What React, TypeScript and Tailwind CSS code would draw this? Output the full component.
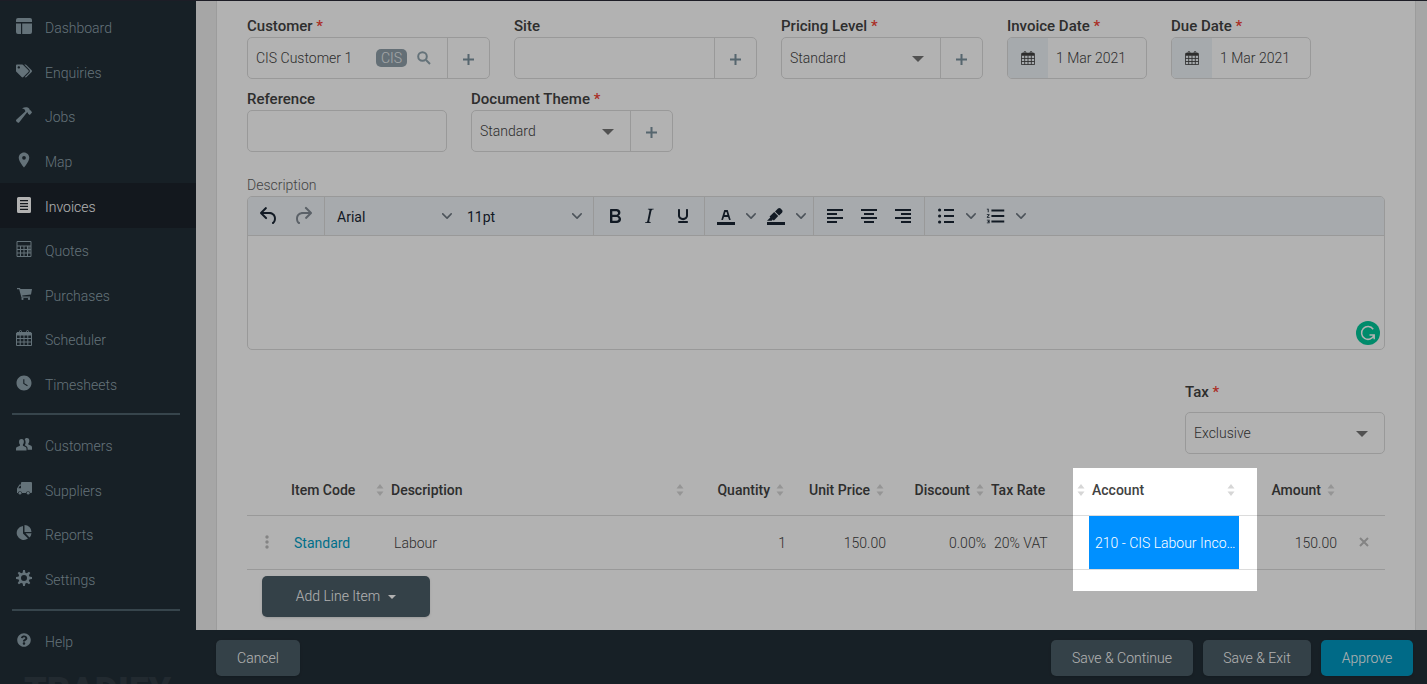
import { useState } from 'react';
import type { ReactNode } from 'react';
import { FaTags, FaQuestionCircle } from 'react-icons/fa';
import { MdFormatListNumbered, MdLocationOn, MdWatchLater } from 'react-icons/md';
import { clsx } from 'clsx';

interface NavItem {
  label: string;
  icon: ReactNode;
  active?: boolean;
}

function DashboardIcon() {
  return (
    <svg viewBox="0 0 16 16" className="h-4 w-4" fill="currentColor" aria-hidden="true">
      <path d="M2 0h12a2 2 0 0 1 2 2v2H0V2a2 2 0 0 1 2-2ZM0 5.500h5V16H2a2 2 0 0 1-2-2ZM6.200 5.500H16V14a2 2 0 0 1-2 2H6.200Z" />
    </svg>
  );
}

function HammerIcon() {
  return (
    <svg viewBox="0 0 16 16" className="h-4 w-4" fill="currentColor" aria-hidden="true">
      <path d="M6 1.600C8.500-.1 11.500-.2 13.300 1.800l.6 1.500 1 .2 1.100 1.900-2.200 2.500-1.700-1.200-.2-1.100-1-.2L3.300 15.300a1.300 1.300 0 0 1-1.900 0l-.9-.8a1.300 1.300 0 0 1 0-1.900L9.300 4.500C9.400 2.900 8 1.700 6 1.600Z" />
    </svg>
  );
}

function InvoiceIcon() {
  return (
    <svg viewBox="0 0 14 16" className="h-4 w-3.5" fill="currentColor" aria-hidden="true">
      <path fillRule="evenodd" d="M1.500 0h11A1.500 1.500 0 0 1 14 1.500v13a1.500 1.500 0 0 1-1.500 1.500h-11A1.500 1.500 0 0 1 0 14.500v-13A1.500 1.500 0 0 1 1.500 0ZM3 3v1.300h8V3Zm0 2.900v1.300h8V5.900Zm0 2.900v1.300h8V8.800Zm0 2.900V13h8v-1.300Z" />
    </svg>
  );
}

function CalculatorIcon() {
  return (
    <svg viewBox="0 0 15 16" className="h-4 w-4" fill="none" stroke="currentColor" aria-hidden="true">
      <path d="M.5.5h14v15H.5ZM.5 5h14M.5 8.500h14M.5 12h14M4 5v10.500M7.500 5v10.500M11 5v10.500" />
      <path d="M11 5h3v7h-3Z" fill="currentColor" stroke="none" opacity="0.5" />
    </svg>
  );
}

function CalendarIcon({ className = 'h-4 w-4' }: { className?: string }) {
  return (
    <svg viewBox="0 0 16 16" className={className} fill="none" stroke="currentColor" aria-hidden="true">
      <path d="M.5 3h15v12.500H.5ZM.5 8.500h15M.5 12h15M4.200 5v10.500M8 5v10.500M11.800 5v10.500" />
      <path d="M1 2h14v3.500H1Z" fill="currentColor" stroke="none" />
      <rect x="3.500" y=".5" width="2" height="3.500" rx="1" />
      <rect x="10.500" y=".5" width="2" height="3.500" rx="1" />
    </svg>
  );
}

function CartIcon() {
  return (
    <svg viewBox="0 0 15 12" className="h-3 w-[15px]" fill="currentColor" aria-hidden="true">
      <path d="M0 0h3l.4 1H15l-1 5.500-8.800 1 .3 1H13v1.200H4.500L2.200 1.200H0Z" />
      <circle cx="5.500" cy="10.900" r="1.100" />
      <circle cx="12" cy="10.900" r="1.100" />
    </svg>
  );
}

function PeopleIcon() {
  return (
    <svg viewBox="0 0 16 13" className="h-[13px] w-4" fill="currentColor" aria-hidden="true">
      <path d="M5.500 1C7.300 1 8 2.300 7.900 4c-.1 1.200-.5 2-1 2.600v1.100l2.600 1.200c.7.400 1 .9 1 1.900v1.700H0v-1.700c0-1 .3-1.500 1-1.900l2.900-1.200V6.600C3.300 6 3 5.200 3 4c0-1.800.7-3 2.500-3Z" />
      <path d="M10.800 0c1.900 0 2.600 1.200 2.500 2.900-.1 1.200-.4 2-1 2.600v1l2.400 1.100c.8.400 1.300.9 1.300 2v2.200h-4.400v-1.200c0-1.300-.6-2.100-1.600-2.600L9.200 7.600c-.4-.2-.5-.5-.2-.9.800-1.200.9-3.700-.2-5.300.3-.8.900-1.400 2-1.400Z" />
    </svg>
  );
}

function TruckIcon() {
  return (
    <svg viewBox="0 0 16 13" className="h-[13px] w-4" fill="currentColor" aria-hidden="true">
      <path fillRule="evenodd" d="M6 0h9a1 1 0 0 1 1 1v9a.9.9 0 0 1-.9.900h-.8a2.200 2.200 0 0 0-4.300 0H6.100a2.200 2.200 0 0 0-4.300 0H1V6.400L3.500 2.500H5V1a1 1 0 0 1 1-1ZM2.300 6.300H5V3.700H4Z" />
      <circle cx="4" cy="11.200" r="1.400" />
      <circle cx="12.200" cy="11.200" r="1.400" />
    </svg>
  );
}

function PieIcon() {
  return (
    <svg viewBox="0 0 16 16" className="h-4 w-4" fill="currentColor" aria-hidden="true">
      <path d="M7 1v7.500l5 5A7 7 0 1 1 7 1Z" />
      <path d="M8.500 0A7 7 0 0 1 15.500 7H8.500Z" />
      <path d="M9.500 8.300h6a7 7 0 0 1-2 4.200Z" />
    </svg>
  );
}

function GearIcon() {
  return (
    <svg viewBox="0 0 16 16" className="h-4 w-4" fill="currentColor" aria-hidden="true">
      <circle cx="8" cy="8" r="4.300" fill="none" stroke="currentColor" strokeWidth="2.600" />
      {[0, 45, 90, 135, 180, 225, 270, 315].map((angle) => (
        <path key={angle} d="M6.500 3.200 7.100 0h1.800l.6 3.200Z" transform={`rotate(${angle} 8 8)`} />
      ))}
    </svg>
  );
}

const MAIN_NAV: NavItem[] = [
  { label: 'Dashboard', icon: <DashboardIcon /> },
  { label: 'Enquiries', icon: <FaTags className="h-4 w-4" /> },
  { label: 'Jobs', icon: <HammerIcon /> },
  { label: 'Map', icon: <MdLocationOn className="h-[18px] w-[18px]" /> },
  { label: 'Invoices', icon: <InvoiceIcon />, active: true },
  { label: 'Quotes', icon: <CalculatorIcon /> },
  { label: 'Purchases', icon: <CartIcon /> },
  { label: 'Scheduler', icon: <CalendarIcon /> },
  { label: 'Timesheets', icon: <MdWatchLater className="h-[18px] w-[18px]" /> },
];

const ADMIN_NAV: NavItem[] = [
  { label: 'Customers', icon: <PeopleIcon /> },
  { label: 'Suppliers', icon: <TruckIcon /> },
  { label: 'Reports', icon: <PieIcon /> },
  { label: 'Settings', icon: <GearIcon /> },
];

function NavLink({ item }: { item: NavItem }) {
  return (
    <a
      href="#"
      className={clsx(
        'flex flex-1 items-center gap-3 pl-[15px]',
        item.active ? 'bg-[#1c232c] text-white' : 'text-[#90a4ae]',
      )}
    >
      <span className="flex w-[18px] justify-center pb-0.5">{item.icon}</span>
      <span className="pt-0.5">{item.label}</span>
    </a>
  );
}

function Sidebar() {
  return (
    <aside className="flex w-[196px] shrink-0 flex-col overflow-hidden bg-[#222e37] pt-1">
      <nav className="flex flex-col">
        <div className="flex h-[401px] flex-col">
          {MAIN_NAV.map((item) => <NavLink key={item.label} item={item} />)}
        </div>
        <hr className="mt-[7px] mr-4 mb-2 ml-3 border-t-2 border-[#4f636d]" />
        <div className="flex h-[178px] flex-col">
          {ADMIN_NAV.map((item) => <NavLink key={item.label} item={item} />)}
        </div>
        <hr className="mt-2 mr-4 mb-2 ml-3 border-t-2 border-[#4f636d]" />
        <div className="flex h-11 flex-col">
          <NavLink item={{ label: 'Help', icon: <FaQuestionCircle className="h-3.5 w-3.5" /> }} />
        </div>
      </nav>
      <div className="mt-3 pl-6 text-4xl leading-8 font-black text-[#313d46]">TRADIFY</div>
    </aside>
  );
}

interface FieldProps {
  label: string;
  id: string;
  required?: boolean;
  children: ReactNode;
}

function Field({ label, id, required, children }: FieldProps) {
  return (
    <div>
      <label htmlFor={id} className="block h-[21px] text-[15px] leading-5 font-medium">
        {label}
        {required && <span className="text-[#f44336]"> *</span>}
      </label>
      {children}
    </div>
  );
}

const BOX = 'flex h-[42px] rounded-[5px] border border-[#dcdcdc]';

function Caret() {
  return <span className="pointer-events-none absolute top-[18px] right-4 border-x-[6px] border-t-[6px] border-x-transparent border-t-[#757575]" />;
}

function SelectBox({ id, value }: { id: string; value: string }) {
  return (
    <div className="relative flex flex-1">
      <select id={id} className="w-full appearance-none bg-transparent pl-2 outline-none">
        <option>{value}</option>
      </select>
      <Caret />
    </div>
  );
}

function AddButton({ label }: { label: string }) {
  return (
    <button aria-label={label} className="flex w-[42px] shrink-0 items-center justify-center border-l border-[#dcdcdc] text-[#7b929e]">
      <svg viewBox="0 0 11 11" className="mt-0.5 h-[11px] w-[11px]" stroke="currentColor" strokeWidth="2" aria-hidden="true">
        <path d="M5.500 0v11M0 5.500h11" />
      </svg>
    </button>
  );
}

function DateBox({ id }: { id: string }) {
  return (
    <div className={clsx(BOX, 'w-[140px] overflow-hidden')}>
      <span className="flex w-10 items-center justify-center bg-[#eef4f8]">
        <CalendarIcon className="h-3.5 w-3.5" />
      </span>
      <input id={id} defaultValue="1 Mar 2021" className="w-0 flex-1 pl-2 outline-none" />
    </div>
  );
}

function InvoiceFields() {
  return (
    <div className="flex flex-col gap-2.5">
      <div className="flex gap-6">
        <Field label="Customer" id="customer" required>
          <div className={clsx(BOX, 'w-[243px]')}>
            <div className="flex flex-1 items-center pl-2">
              <input id="customer" defaultValue="CIS Customer 1" className="w-[120px] outline-none" />
              <span className="rounded-[5px] bg-[#90a0aa] px-[5px] leading-[18px] text-[#eceff1]">CIS</span>
              <button aria-label="Search customers" className="ml-2.5 text-[#90a4ae]">
                <svg viewBox="0 0 14 14" className="h-3.5 w-3.5" fill="none" stroke="currentColor" strokeWidth="2" aria-hidden="true">
                  <circle cx="5.500" cy="5.500" r="4.300" />
                  <path d="m9 9 4 4" />
                </svg>
              </button>
            </div>
            <AddButton label="Add customer" />
          </div>
        </Field>
        <Field label="Site" id="site">
          <div className={clsx(BOX, 'w-[243px]')}>
            <input id="site" className="w-0 flex-1 pl-2 outline-none" />
            <AddButton label="Add site" />
          </div>
        </Field>
        <Field label="Pricing Level" id="pricing" required>
          <div className={clsx(BOX, 'w-[202px]')}>
            <SelectBox id="pricing" value="Standard" />
            <AddButton label="Add pricing level" />
          </div>
        </Field>
        <Field label="Invoice Date" id="invoice-date" required>
          <DateBox id="invoice-date" />
        </Field>
        <Field label="Due Date" id="due-date" required>
          <DateBox id="due-date" />
        </Field>
      </div>
      <div className="flex gap-6">
        <Field label="Reference" id="reference">
          <div className={clsx(BOX, 'w-[200px]')}>
            <input id="reference" className="w-0 flex-1 pl-2 outline-none" />
          </div>
        </Field>
        <Field label="Document Theme" id="theme" required>
          <div className={clsx(BOX, 'w-[202px]')}>
            <SelectBox id="theme" value="Standard" />
            <AddButton label="Add document theme" />
          </div>
        </Field>
      </div>
    </div>
  );
}

const ICONS = {
  undo: 'M6.400 8H12c3.700 0 6.200 2 6.800 5.100.6 2.700-.4 5.600-2.300 6.800a1 1 0 0 1-1-1.800c1.100-.6 1.800-2.700 1.400-4.600-.5-2.100-2.100-3.500-4.900-3.500H6.400l3.300 3.300a1 1 0 1 1-1.400 1.400l-5-5a1 1 0 0 1 0-1.400l5-5a1 1 0 0 1 1.400 1.400L6.400 8Z',
  redo: 'M17.600 10H12c-2.800 0-4.400 1.400-4.900 3.500-.4 2 .3 4 1.400 4.600a1 1 0 1 1-1 1.800c-2-1.200-2.900-4.100-2.300-6.800.6-3 3-5.100 6.800-5.100h5.600l-3.300-3.300a1 1 0 1 1 1.400-1.400l5 5a1 1 0 0 1 0 1.400l-5 5a1 1 0 0 1-1.400-1.400l3.300-3.300Z',
  bold: 'M7.800 19c-.3 0-.5 0-.6-.2l-.2-.5V5.700c0-.2 0-.4.2-.5l.6-.2h5c1.500 0 2.700.3 3.500 1 .7.6 1.100 1.400 1.100 2.500a3 3 0 0 1-.6 1.900c-.4.6-1 1-1.600 1.200.4.100.9.300 1.300.6s.8.700 1 1.200c.4.400.5 1 .5 1.600 0 1.300-.4 2.300-1.300 3-.8.700-2.100 1-3.800 1H7.800Zm5-8.300c.6 0 1.200-.1 1.600-.5.4-.3.6-.7.6-1.300 0-1.100-.8-1.700-2.300-1.700H9.300v3.500h3.400Zm.5 6c.7 0 1.300-.1 1.700-.4.4-.4.6-.9.6-1.500s-.2-1-.7-1.400c-.4-.3-1-.4-2-.4H9.400v3.800h4Z',
  italic: 'm16.700 4.700-.1.900h-.3c-.6 0-1 0-1.400.3-.3.3-.4.6-.5 1.100l-2.100 9.800v.6c0 .5.4.8 1.400.8h.2l-.2.8H8l.2-.8h.2c1.100 0 1.800-.5 2-1.500l2-9.800.1-.5c0-.6-.4-.8-1.400-.8h-.3l.2-.9h5.800Z',
  underline: 'M16 5c.6 0 1 .4 1 1v5.500a4 4 0 0 1-.4 1.800l-1 1.400a5.300 5.300 0 0 1-5.500 1 5 5 0 0 1-1.600-1c-.5-.4-.8-.9-1.100-1.400a4 4 0 0 1-.4-1.800V6c0-.6.4-1 1-1s1 .4 1 1v5.500c0 .3 0 .6.2 1l.6.700a3.300 3.300 0 0 0 2.200.8 3.400 3.400 0 0 0 2.200-.8c.3-.2.4-.5.6-.8l.2-.9V6c0-.6.4-1 1-1ZM8 17h8c.6 0 1 .4 1 1s-.4 1-1 1H8a1 1 0 0 1 0-2Z',
  color: 'M3 18h18v3H3ZM8.700 16h-.8a.5.500 0 0 1-.5-.6l2.700-9c.1-.3.3-.4.5-.4h2.800c.2 0 .4.100.5.400l2.700 9a.5.500 0 0 1-.5.600h-.8a.5.500 0 0 1-.4-.4l-.7-2.200c0-.3-.3-.4-.5-.4h-3.400c-.2 0-.4.100-.5.400l-.7 2.200c0 .3-.2.400-.4.400Zm2.600-7.600-.6 2a.5.500 0 0 0 .5.600h1.600a.5.500 0 0 0 .5-.6l-.6-2c0-.3-.3-.4-.5-.4h-.4c-.2 0-.4.100-.5.400Z',
  highlight: 'M3 18h18v3H3ZM7.700 16.700H3l3.300-3.300-.7-.8L10.200 8l4 4.100-4 4.200c-.2.2-.6.2-.8 0l-.6-.7-1.100 1.100ZM15.100 11.600 11 7.400l3-2.900a2 2 0 0 1 2.600 0L18 6c.7.700.7 2 0 2.700Z',
  left: 'M4 5h16v2H4ZM4 9h10v2H4ZM4 13h16v2H4ZM4 17h10v2H4Z',
  center: 'M4 5h16v2H4ZM7 9h10v2H7ZM4 13h16v2H4ZM7 17h10v2H7Z',
  right: 'M4 5h16v2H4ZM10 9h10v2H10ZM4 13h16v2H4ZM10 17h10v2H10Z',
  bullets: 'M10 5h10v2H10ZM10 11h10v2H10ZM10 17h10v2H10ZM4 6a1.600 1.600 0 1 1 3.200 0A1.600 1.600 0 1 1 4 6ZM4 12a1.600 1.600 0 1 1 3.200 0A1.600 1.600 0 1 1 4 12ZM4 18a1.600 1.600 0 1 1 3.200 0A1.600 1.600 0 1 1 4 18Z',
};

function Tool({ name, label, disabled }: { name: keyof typeof ICONS; label: string; disabled?: boolean }) {
  return (
    <button aria-label={label} disabled={disabled} className={clsx('flex w-[34px] justify-center', disabled && 'opacity-50')}>
      <svg viewBox="0 0 24 24" className="h-6 w-6" fill="currentColor" fillRule="evenodd" aria-hidden="true">
        <path d={ICONS[name]} />
      </svg>
    </button>
  );
}

function Chevron() {
  return (
    <svg viewBox="0 0 10 10" className="h-2.5 w-2.5" fill="currentColor" opacity="0.6" aria-hidden="true">
      <path d="M8.700 2.200c.3-.3.8-.3 1 0 .4.4.4.9 0 1.200L5.700 7.800c-.3.3-.9.3-1.200 0L.2 3.400a.8.800 0 0 1 0-1.200c.3-.3.8-.3 1.100 0L5 6l3.700-3.800Z" />
    </svg>
  );
}

function MenuArrow({ label }: { label: string }) {
  return (
    <button aria-label={label} className="flex w-4 justify-center">
      <Chevron />
    </button>
  );
}

const GROUP = 'flex items-center border-r border-[#dcdcdc]';

function Editor() {
  return (
    <div className="rounded-[5px] border border-[#dcdcdc]">
      <div className="flex h-[39px] rounded-t-[4px] border-b border-[#dcdcdc] bg-[#eff4f8] font-normal text-[#1a2634]">
        <div className={clsx(GROUP, 'pr-1 pl-1')}>
          <Tool name="undo" label="Undo" />
          <Tool name="redo" label="Redo" disabled />
        </div>
        <div className={clsx(GROUP, 'pr-[11px] pl-3')}>
          <button className="flex w-[130px] items-center justify-between pr-[15px]">
            <span className="pt-0.5">Arial</span> <Chevron />
          </button>
          <button className="flex w-[115px] items-center justify-between">
            <span className="pt-0.5">11pt</span> <Chevron />
          </button>
        </div>
        <div className={clsx(GROUP, 'px-1')}>
          <Tool name="bold" label="Bold" />
          <Tool name="italic" label="Italic" />
          <Tool name="underline" label="Underline" />
        </div>
        <div className={clsx(GROUP, 'px-1')}>
          <Tool name="color" label="Text color" />
          <MenuArrow label="Text color menu" />
          <Tool name="highlight" label="Background color" />
          <MenuArrow label="Background color menu" />
        </div>
        <div className={clsx(GROUP, 'px-1')}>
          <Tool name="left" label="Align left" />
          <Tool name="center" label="Align center" />
          <Tool name="right" label="Align right" />
        </div>
        <div className="flex items-center px-1">
          <Tool name="bullets" label="Bullet list" />
          <MenuArrow label="Bullet list menu" />
          <button aria-label="Numbered list" className="flex w-[34px] justify-center">
            <MdFormatListNumbered className="h-[22px] w-[22px]" />
          </button>
          <MenuArrow label="Numbered list menu" />
        </div>
      </div>
      <div className="relative flex">
        <textarea aria-label="Description" className="h-[113px] flex-1 resize-none bg-transparent p-3 outline-none" />
        <svg viewBox="0 0 24 24" className="absolute right-1 bottom-1 h-6 w-6" aria-hidden="true">
          <circle cx="12" cy="12" r="12" fill="#00c79a" />
          <path d="M17.200 8.200A6.400 6.400 0 1 0 18 14.200M13.500 14h4.700v4.300" fill="none" stroke="#fff" strokeWidth="1.500" />
        </svg>
      </div>
    </div>
  );
}

function SortIcon() {
  return (
    <svg viewBox="0 0 8 12" className="h-3 w-2 shrink-0" fill="#d6d6d6" aria-hidden="true">
      <path d="M4 0l3.500 4.500h-7ZM4 12 .5 7.500h7Z" />
    </svg>
  );
}

interface Column {
  label: string;
  width: string;
  numeric?: boolean;
  spotlight?: boolean;
}

const COLUMNS: Column[] = [
  { label: 'Item Code', width: 'w-[100px]' },
  { label: 'Description', width: '' },
  { label: 'Quantity', width: 'w-[100px]', numeric: true },
  { label: 'Unit Price', width: 'w-[100px]', numeric: true },
  { label: 'Discount', width: 'w-[100px]', numeric: true },
  { label: 'Tax Rate', width: 'w-[101px]' },
  { label: 'Account', width: 'w-[150px]', spotlight: true },
  { label: 'Amount', width: 'w-[100px]', numeric: true },
];

function LineItems() {
  return (
    <table className="w-full table-fixed border-collapse">
      <thead>
        <tr className="h-[50px] border-b border-[#dcdcdc]">
          <th className="w-[41px]" />
          {COLUMNS.map((col) => (
            <th key={col.label} className={clsx('relative p-0 font-medium', col.width)}>
              <div className={clsx('flex items-center pr-1 pl-[3px]', col.numeric ? 'justify-end gap-1.5' : 'justify-between')}>
                {col.label}
                <SortIcon />
              </div>
              {/* Highlights the account column and dims the rest of the page */}
              {col.spotlight && (
                <div className="pointer-events-none absolute top-[3px] -right-[18px] -left-4 z-50 h-[123px] shadow-[0_0_0_9999px_rgba(0,0,0,0.3)]" />
              )}
            </th>
          ))}
          <th className="w-[46px]" />
        </tr>
      </thead>
      <tbody>
        <tr className="h-[54px] border-b border-[#dcdcdc]">
          <td className="p-0">
            <svg viewBox="0 0 4 14" className="ml-[18px] h-3.5 w-1" fill="#bdbdbd" aria-hidden="true">
              <circle cx="2" cy="2" r="1.700" />
              <circle cx="2" cy="7" r="1.700" />
              <circle cx="2" cy="12" r="1.700" />
            </svg>
          </td>
          <td className="p-0 pt-0.5 pl-1.5"><a href="#" className="font-normal text-[#009fc7]">Standard</a></td>
          <td className="p-0 pt-0.5 pl-1.5">Labour</td>
          <td className="p-0 pt-0.5 pr-0.5 text-right">1</td>
          <td className="p-0 pt-0.5 pr-0.5 text-right">150.00</td>
          <td className="p-0 pt-0.5 pr-0.5 text-right">0.00%</td>
          <td className="p-0 pt-0.5 pl-1.5">20% VAT</td>
          <td className="truncate bg-[#0090ff] p-0 pt-0.5 pr-0.5 pl-1.5 text-white">210 - CIS Labour Income</td>
          <td className="p-0 pt-0.5 pr-0.5 text-right">150.00</td>
          <td className="p-0 pl-1 text-center">
            <button aria-label="Remove line" className="text-[#bdbdbd]">
              <svg viewBox="0 0 10 10" className="h-2.5 w-2.5" stroke="currentColor" strokeWidth="2" aria-hidden="true">
                <path d="m1 1 8 8M9 1 1 9" />
              </svg>
            </button>
          </td>
        </tr>
      </tbody>
    </table>
  );
}

const BUTTON = 'rounded-[5px] text-white shadow-sm';

export default function App() {
  const [saved, setSaved] = useState(false);

  return (
    <div className="flex h-screen overflow-hidden border-t border-[#1d1d26] bg-[#eeeeee] font-[Roboto,sans-serif] text-sm font-light text-[#424242]">
      <Sidebar />
      <div className="flex min-w-0 flex-1 flex-col">
        <main className="flex-1 pr-[11px] pl-5">
          <div className="h-full border-x border-[#e0e0e0] bg-white pt-[15px] pr-[30px] pl-[30px]">
            <InvoiceFields />
            <div className="mt-[23px] mb-px leading-5 text-[#616161]">Description</div>
            <Editor />
            <div className="mt-8 flex justify-end">
              <div className="w-[200px]">
                <label htmlFor="tax" className="block h-[30px] text-[15px] leading-5 font-medium">
                  Tax<span className="text-[#f44336]"> *</span>
                </label>
                <div className={BOX}>
                  <SelectBox id="tax" value="Exclusive" />
                </div>
              </div>
            </div>
            <div className="mt-[11px]">
              <LineItems />
            </div>
            <button className={clsx(BUTTON, 'mt-1.5 ml-[15px] flex h-[41px] w-[168px] items-center justify-center gap-2 bg-[#4b5d67]')}>
              Add Line Item
              <span className="mt-0.5 border-x-4 border-t-4 border-x-transparent border-t-white" />
            </button>
          </div>
        </main>
        <footer className="flex h-[54px] shrink-0 items-center gap-2.5 bg-[#222e37] pt-0.5 pr-3.5 pl-5">
          <button className={clsx(BUTTON, 'mr-auto h-9 w-[84px] bg-[#4b5d67]')}>Cancel</button>
          <button className={clsx(BUTTON, 'h-9 w-[142px] bg-[#4b5d67]')} onClick={() => setSaved(true)} disabled={saved}>
            Save &amp; Continue
          </button>
          <button className={clsx(BUTTON, 'h-9 w-[108px] bg-[#4b5d67]')}>Save &amp; Exit</button>
          <button className={clsx(BUTTON, 'h-9 w-[92px] bg-[#0099c2]')}>Approve</button>
        </footer>
      </div>
    </div>
  );
}
